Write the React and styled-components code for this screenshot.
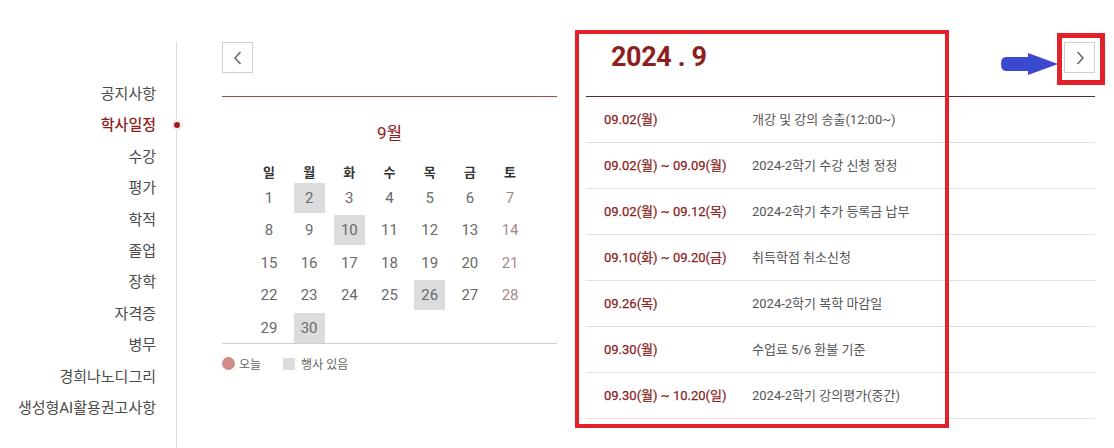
import React from "react";
import styled, { createGlobalStyle } from "styled-components";

const GlobalStyle = createGlobalStyle`
  body {
    margin: 0;
    padding: 0;
    background: #fff;
    font-family: Roboto, "Noto Sans CJK KR", sans-serif;
  }
`;

const Page = styled.div`
  position: relative;
  display: flex;
  width: 1114px;
  height: 448px;
  overflow: hidden;
`;

const Sidebar = styled.nav`
  box-sizing: border-box;
  width: 177px;
  margin-top: 42px;
  padding: 37px 20px 0 0;
  border-right: 1px solid #dcdcdc;
  display: flex;
  flex-direction: column;
  align-items: flex-end;
`;

const MenuItem = styled.div`
  position: relative;
  height: 31.4px;
  line-height: 31.4px;
  font-size: 15px;
  color: ${(p) => (p.$active ? "#8e1f1f" : "#4a4a4a")};
  font-weight: ${(p) => (p.$active ? 500 : 400)};
  white-space: nowrap;
`;

const ActiveDot = styled.span`
  position: absolute;
  right: -27px;
  top: 50%;
  width: 12px;
  height: 12px;
  margin-top: -7px;
  border-radius: 50%;
  background: #fbeeee;
  display: flex;
  align-items: center;
  justify-content: center;
  &::after {
    content: "";
    width: 6px;
    height: 6px;
    border-radius: 50%;
    background: #a01c24;
  }
`;

const Main = styled.main`
  display: flex;
  gap: 29px;
  margin-left: 45px;
  padding-top: 42px;
`;

const CalendarCol = styled.section`
  width: 335px;
  display: flex;
  flex-direction: column;
`;

const NavButton = styled.button`
  box-sizing: border-box;
  width: 31px;
  height: 31px;
  padding: 0;
  border: 1px solid #cfcfcf;
  background: #fff;
  display: flex;
  align-items: center;
  justify-content: center;
  color: #666;
  cursor: pointer;
`;

const Rule = styled.div`
  height: 1px;
  background: ${(p) => p.$color};
`;

const MonthTitle = styled.div`
  margin-top: 24px;
  height: 24px;
  line-height: 24px;
  text-align: center;
  font-size: 17px;
  color: #8e1f1f;
`;

const Grid = styled.div`
  margin: 17px auto 0;
  display: grid;
  grid-template-columns: repeat(7, 40.2px);
  grid-template-rows: 18px;
  grid-auto-rows: 30px;
  row-gap: 2.6px;
`;

const WeekDay = styled.div`
  text-align: center;
  font-size: 13px;
  font-weight: 700;
  color: #333;
  line-height: 16px;
  padding-top: 3px;
`;

const Day = styled.div`
  justify-self: center;
  width: 31px;
  height: 30px;
  line-height: 30px;
  text-align: center;
  font-size: 15px;
  color: ${(p) => (p.$sat ? "#a58a8a" : "#6a6a6a")};
  background: ${(p) => (p.$event ? "#dcdcdc" : "transparent")};
`;

const CalendarFoot = styled.div`
  border-top: 1px solid #cfcfcf;
`;

const Legend = styled.div`
  display: flex;
  align-items: center;
  height: 40px;
  font-size: 12px;
  color: #666;
`;

const LegendMark = styled.span`
  width: ${(p) => (p.$round ? "13px" : "12px")};
  height: ${(p) => (p.$round ? "13px" : "12px")};
  border-radius: ${(p) => (p.$round ? "50%" : "0")};
  background: ${(p) => (p.$round ? "#d38a8a" : "#dcdcdc")};
  margin-right: ${(p) => (p.$round ? "4px" : "6px")};
`;

const LegendLabel = styled.span`
  margin-right: 22px;
`;

const ScheduleCol = styled.section`
  width: 509px;
  display: flex;
  flex-direction: column;
`;

const ScheduleHead = styled.div`
  display: flex;
  justify-content: space-between;
  align-items: flex-start;
  height: 54px;
`;

const YearMonth = styled.h2`
  margin: 0 0 0 25px;
  font-size: 27px;
  font-weight: 700;
  line-height: 30px;
  color: #8e1f1f;
  letter-spacing: -0.4px;
`;

const EventRow = styled.div`
  display: flex;
  align-items: center;
  box-sizing: border-box;
  height: 46px;
  padding: 0 0 3px 18px;
  border-bottom: 1px solid #e0e0e0;
  font-size: 13px;
`;

const EventDate = styled.span`
  width: 148px;
  color: #8a1f1f;
  font-weight: 400;
  -webkit-text-stroke: 0.25px #8a1f1f;
`;

const EventText = styled.span`
  color: #555;
`;

const MarkBox = styled.div`
  position: absolute;
  box-sizing: border-box;
  border: ${(p) => p.$w}px solid #e4202a;
  pointer-events: none;
`;

const Arrow = styled.svg`
  position: absolute;
  left: 1000px;
  top: 52px;
`;

const Chevron = ({ dir }) => (
  <svg width="12" height="16" viewBox="0 0 12 16">
    <path
      d={dir === "left" ? "M8.5 2 L3 8 L8.5 14" : "M3.5 2 L9 8 L3.5 14"}
      fill="none"
      stroke="#666"
      strokeWidth="1.5"
    />
  </svg>
);

const menu = [
  "공지사항",
  "학사일정",
  "수강",
  "평가",
  "학적",
  "졸업",
  "장학",
  "자격증",
  "병무",
  "경희나노디그리",
  "생성형AI활용권고사항",
];

const weekdays = ["일", "월", "화", "수", "목", "금", "토"];
const eventDays = [2, 10, 26, 30];

const events = [
  ["09.02(월)", "개강 및 강의 송출(12:00~)"],
  ["09.02(월) ~ 09.09(월)", "2024-2학기 수강 신청 정정"],
  ["09.02(월) ~ 09.12(목)", "2024-2학기 추가 등록금 납부"],
  ["09.10(화) ~ 09.20(금)", "취득학점 취소신청"],
  ["09.26(목)", "2024-2학기 복학 마감일"],
  ["09.30(월)", "수업료 5/6 환불 기준"],
  ["09.30(월) ~ 10.20(일)", "2024-2학기 강의평가(중간)"],
];

export default function App() {
  const days = Array.from({ length: 30 }, (_, i) => i + 1);
  return (
    <>
      <GlobalStyle />
      <Page>
        <Sidebar>
          {menu.map((m) => (
            <MenuItem key={m} $active={m === "학사일정"}>
              {m}
              {m === "학사일정" && <ActiveDot />}
            </MenuItem>
          ))}
        </Sidebar>
        <Main>
          <CalendarCol>
            <NavButton aria-label="이전 달">
              <Chevron dir="left" />
            </NavButton>
            <Rule $color="#a04a4a" style={{ marginTop: 23 }} />
            <MonthTitle>9월</MonthTitle>
            <Grid>
              {weekdays.map((w) => (
                <WeekDay key={w}>{w}</WeekDay>
              ))}
              {days.map((d) => (
                <Day key={d} $sat={d % 7 === 0} $event={eventDays.includes(d)}>
                  {d}
                </Day>
              ))}
            </Grid>
            <CalendarFoot />
            <Legend>
              <LegendMark $round />
              <LegendLabel>오늘</LegendLabel>
              <LegendMark />
              <LegendLabel>행사 있음</LegendLabel>
            </Legend>
          </CalendarCol>
          <ScheduleCol>
            <ScheduleHead>
              <YearMonth>2024 . 9</YearMonth>
              <NavButton aria-label="다음 달">
                <Chevron dir="right" />
              </NavButton>
            </ScheduleHead>
            <Rule $color="#4d3030" />
            {events.map(([date, text]) => (
              <EventRow key={date + text}>
                <EventDate>{date}</EventDate>
                <EventText>{text}</EventText>
              </EventRow>
            ))}
          </ScheduleCol>
        </Main>
        <MarkBox $w={4} style={{ left: 575, top: 30, width: 374, height: 398 }} />
        <MarkBox $w={5} style={{ left: 1057, top: 33, width: 48, height: 52 }} />
        <Arrow width="58" height="24" viewBox="0 0 58 24">
          <path
            d="M6 5 H28 V1 L58 12 L28 23 V19 H6 Q1 19 1 12 Q1 5 6 5 Z"
            fill="#3b48cf"
          />
        </Arrow>
      </Page>
    </>
  );
}
